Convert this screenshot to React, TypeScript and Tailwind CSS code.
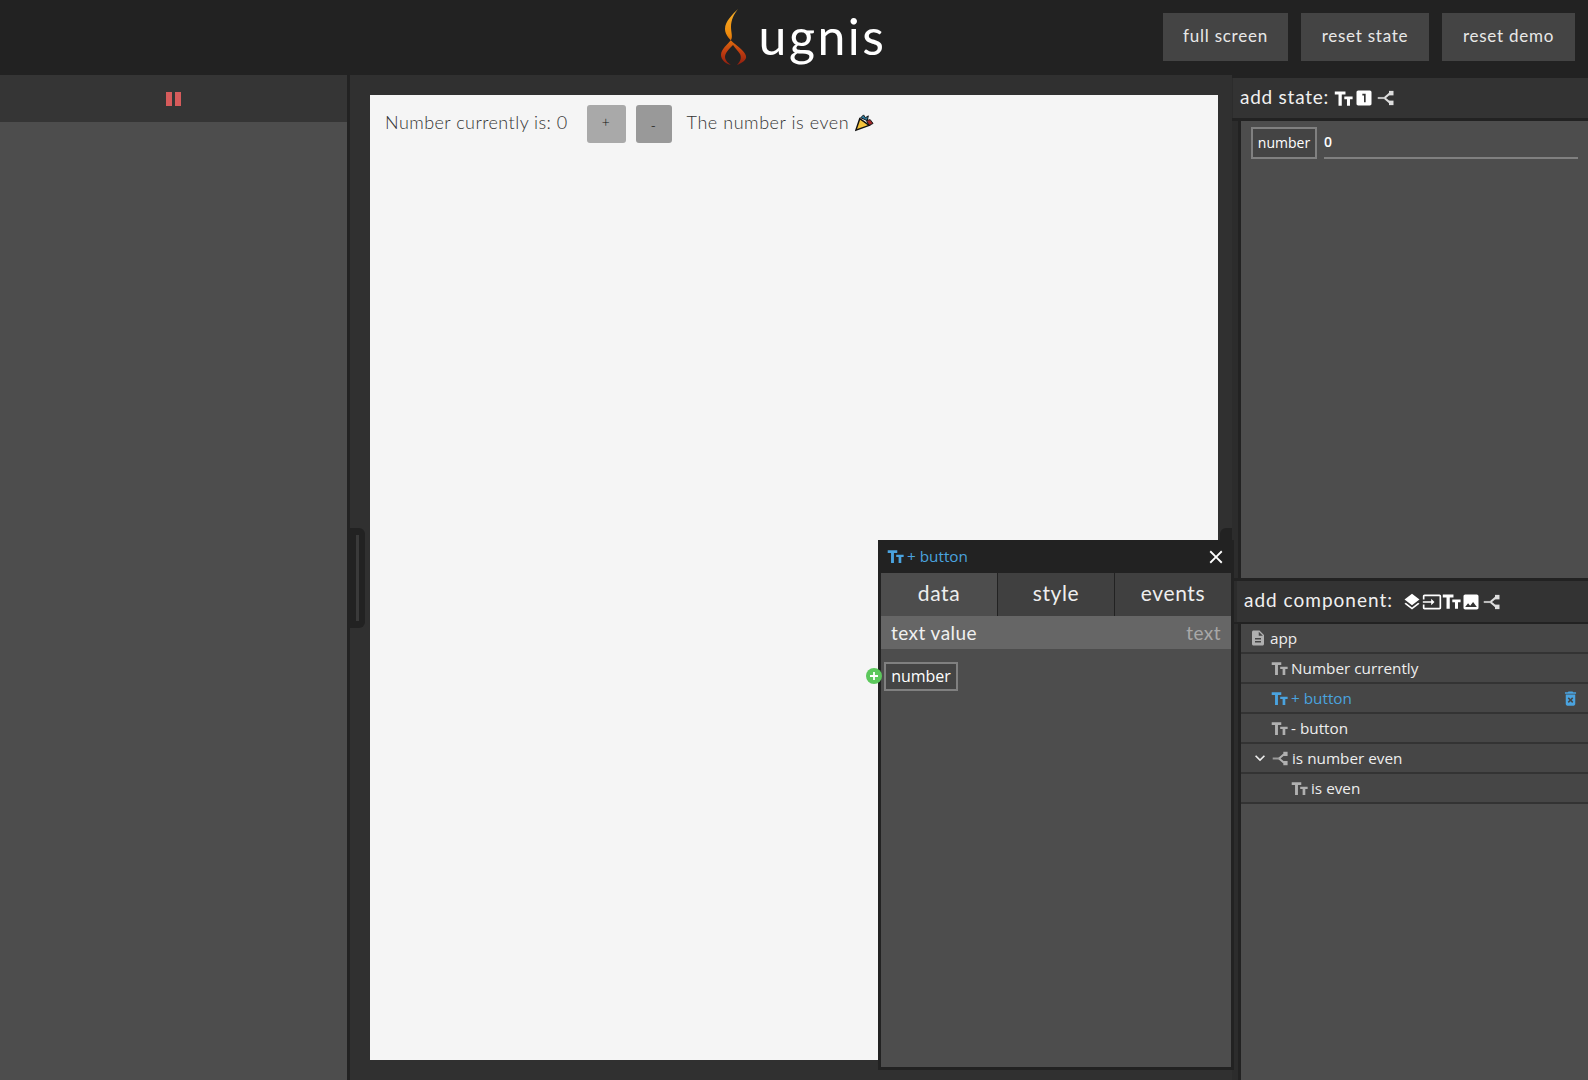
const paths = {
  layers: "M11.99 18.54l-7.37-5.73L3 14.07l9 7 9-7-1.63-1.27-7.38 5.74zM12 16l7.36-5.73L21 9l-9-7-9 7 1.63 1.27L12 16z",
  input: "M21 3.01H3c-1.1 0-2 .9-2 2V9h2V4.99h18v14.03H3V15H1v4.01c0 1.1.9 1.98 2 1.98h18c1.1 0 2-.88 2-1.98v-14c0-1.11-.9-2-2-2zM11 16l4-4-4-4v3H1v2h10v3z",
  image: "M21 19V5c0-1.1-.9-2-2-2H5c-1.1 0-2 .9-2 2v14c0 1.1.9 2 2 2h14c1.1 0 2-.9 2-2zM8.5 13.5l2.5 3.01L14.5 12l4.5 6H5l3.5-4.5z",
  one: "M19 3H5c-1.1 0-2 .9-2 2v14c0 1.1.9 2 2 2h14c1.1 0 2-.9 2-2V5c0-1.1-.9-2-2-2zm-5 14h-2V9h-2V7h4v10z",
  doc: "M14 2H6c-1.1 0-1.99.9-1.99 2L4 20c0 1.1.89 2 1.99 2H18c1.1 0 2-.9 2-2V8l-6-6zm2 16H8v-2h8v2zm0-4H8v-2h8v2zm-3-5V3.5L18.5 9H13z",
  trash: "M6 19c0 1.1.9 2 2 2h8c1.1 0 2-.9 2-2V7H6v12zm2.46-7.12l1.41-1.41L12 12.59l2.12-2.12 1.41 1.41L13.41 14l2.12 2.12-1.41 1.41L12 15.41l-2.12 2.12-1.41-1.41L10.59 14l-2.13-2.12zM15.5 4l-1-1h-5l-1 1H5v2h14V4z",
  chevron: "M16.59 8.59L12 13.17 7.41 8.59 6 10l6 6 6-6z",
  close: "M19 6.41L17.59 5 12 10.59 6.41 5 5 6.41 10.59 12 5 17.59 6.41 19 12 13.41 17.59 19 19 17.59 13.41 12 19 6.41z",
}

function Icon({ d, className }: { d: string; className: string }) {
  return (
    <svg viewBox="0 0 24 24" fill="currentColor" className={className} aria-hidden="true">
      <path d={d} />
    </svg>
  )
}

// big T first, then the small one
function TextIcon({ className }: { className: string }) {
  return (
    <svg viewBox="0 0 24 24" fill="currentColor" className={className} aria-hidden="true">
      <path d="M1 3h13.500v4H9.800v14H5.700V7H1V3zm12 6.500h10.500v3.300h-3.300V21h-3.800v-8.200H13V9.500z" />
    </svg>
  )
}

function SplitIcon({ className }: { className: string }) {
  return (
    <svg viewBox="0 0 24 24" fill="none" stroke="currentColor" className={className} aria-hidden="true">
      <path d="M1 12h9" strokeWidth="2.800" opacity="0.8" />
      <path d="M10 12l7-6M10 12l7 6" strokeWidth="2.800" />
      <rect x="16" y="2.500" width="6" height="6" fill="currentColor" stroke="none" />
      <rect x="16" y="15.500" width="6" height="6" fill="currentColor" stroke="none" />
    </svg>
  )
}

function Flame() {
  return (
    <svg viewBox="0 0 30 60" className="w-[30px] h-[60px]" aria-hidden="true">
      <defs>
        <linearGradient id="flame" x1="0" y1="0" x2="0" y2="1">
          <stop offset="0" stopColor="#f6b02a" />
          <stop offset="0.45" stopColor="#ee8a0c" />
          <stop offset="0.75" stopColor="#c23f10" />
          <stop offset="1" stopColor="#8f1e0f" />
        </linearGradient>
      </defs>
      <path
        fill="url(#flame)"
        d="M19 2C14 7 6 14 6 22c0 6 5 11 10 15 5 4 10 8 11 12 1 4-4 7-9 9 3-3 5-7 3-11-2-3-5-6-7-9-4 4-8 8-8 12 0 3 3 6 6 8-5-1-10-5-10-10 0-6 7-11 10-15 2-3 0-8 0-13C12 13 15 7 19 2z"
      />
    </svg>
  )
}

function PartyPopper() {
  return (
    <svg viewBox="0 0 20 20" className="w-[19px] h-[19px] ml-[6px] mb-[3px]" aria-hidden="true">
      <path d="M1 18L5 6l10 7z" fill="#f5c33b" stroke="#111" strokeWidth="1.500" />
      <path d="M6 5l3-3 2 3 3-2-1 5z" fill="#2b7a9e" stroke="#111" strokeWidth="1" />
      <path d="M12 8l4-1 3 4-4 2z" fill="#a3282a" stroke="#111" strokeWidth="1" />
    </svg>
  )
}

function HeaderButton({ label, width }: { label: string; width: string }) {
  return (
    <div className={`h-12 flex items-center justify-center bg-[#444444] pb-[2px] text-[#e8e8e8] text-[17px] tracking-[0.75px] ${width}`}>
      {label}
    </div>
  )
}

type TreeNode = {
  label: string
  icon: "text" | "doc" | "split"
  indent: string
  active?: boolean
  chevron?: boolean
}

const tree: TreeNode[] = [
  { label: "app", icon: "doc", indent: "pl-[8px]" },
  { label: "Number currently", icon: "text", indent: "pl-[30px]" },
  { label: "+ button", icon: "text", indent: "pl-[30px]", active: true },
  { label: "- button", icon: "text", indent: "pl-[30px]" },
  { label: "is number even", icon: "split", indent: "pl-[9px]", chevron: true },
  { label: "is even", icon: "text", indent: "pl-[50px]" },
]

function TreeRow({ node }: { node: TreeNode }) {
  return (
    <div
      className={`h-[30px] flex items-center border-b-2 border-[#333333] bg-[#464646] text-[15.3px] ${node.indent} ${
        node.active ? "text-[#4aa3df]" : "text-[#eeeeee]"
      }`}
    >
      {node.chevron && <Icon d={paths.chevron} className="w-[20px] h-[20px] text-[#eeeeee] mr-[2px]" />}
      <span className={`flex items-center mr-[3px] ${node.active ? "text-[#4aa3df]" : "text-[#b0b0b0]"}`}>
        {node.icon === "doc" && <Icon d={paths.doc} className="w-[18px] h-[18px]" />}
        {node.icon === "text" && <TextIcon className="w-[17px] h-[17px]" />}
        {node.icon === "split" && <SplitIcon className="w-[17px] h-[17px]" />}
      </span>
      <span>{node.label}</span>
      {node.active && <Icon d={paths.trash} className="w-[19px] h-[19px] ml-auto mr-[8px]" />}
    </div>
  )
}

function PropertyWindow() {
  return (
    <div className="absolute left-[878px] top-[540px] w-[356px] h-[530px] flex flex-col bg-[#222222] px-[3px] pb-[3px] font-['Open_Sans',sans-serif]">
      <div className="h-[33px] shrink-0 flex items-center text-[15.3px] text-[#4aa3df] pl-[6px] pr-[4px]">
        <TextIcon className="w-[17px] h-[17px] mr-[3px]" />
        <span>+ button</span>
        <Icon d={paths.close} className="w-[22px] h-[22px] ml-auto text-white" />
      </div>
      <div className="h-[43px] shrink-0 flex text-[21px] text-[#eeeeee] tracking-[0.6px] font-['Lato',sans-serif]">
        <div className="w-[116px] flex items-center justify-center bg-[#4d4d4d] pb-[4px]">data</div>
        <div className="w-[117px] flex items-center justify-center bg-[#404040] border-l border-[#222222] pb-[4px]">style</div>
        <div className="flex-1 flex items-center justify-center bg-[#404040] border-l border-[#222222] pb-[4px]">events</div>
      </div>
      <div className="flex-1 bg-[#4d4d4d] flex flex-col">
        <div className="h-[33px] flex items-center justify-between bg-[#666666] px-[10px] text-[19px] tracking-[0.45px] font-['Lato',sans-serif]">
          <span className="text-[#f0f0f0] mt-[1px]">text value</span>
          <span className="text-[#a8a8a8] mt-[1px]">text</span>
        </div>
        <div className="relative mt-[13px] ml-[3px] w-[74px] h-[29px] flex items-center justify-center border-2 border-[#808080] bg-[#444444] text-white text-[16px] pb-[2px]">
          number
          <span className="absolute left-[-20px] top-[4px] w-4 h-4 rounded-full bg-[#5cc85c] flex items-center justify-center">
            <svg viewBox="0 0 10 10" className="w-[10px] h-[10px]" aria-hidden="true">
              <path d="M5 1v8M1 5h8" stroke="#fff" strokeWidth="1.800" />
            </svg>
          </span>
        </div>
      </div>
    </div>
  )
}

export default function App() {
  return (
    <div className="relative w-full h-screen overflow-hidden flex flex-col bg-[#222222] font-['Lato',sans-serif]">
      <header className="h-[75px] shrink-0 grid grid-cols-[1fr_auto_1fr] items-center pb-[2px]">
        <div />
        <div className="flex items-center ml-[17px]">
          <Flame />
          <span className="ml-[10px] text-[50px] leading-none text-white tracking-[2.5px] mb-[2px]">ugnis</span>
        </div>
        <div className="flex justify-end gap-[13px] pr-[13px]">
          <HeaderButton label="full screen" width="w-[125px]" />
          <HeaderButton label="reset state" width="w-[128px]" />
          <HeaderButton label="reset demo" width="w-[133px]" />
        </div>
      </header>

      <div className="flex-1 flex min-h-0">
        <aside className="w-[347px] shrink-0 flex flex-col bg-[#4d4d4d]">
          <div className="h-[47px] flex items-center justify-center gap-[3px] bg-[#353535]">
            <span className="w-[6px] h-[14px] bg-[#d65b5b]" />
            <span className="w-[6px] h-[14px] bg-[#d65b5b]" />
          </div>
        </aside>

        <main className="relative flex-1 min-w-0 border-l-[3px] border-[#222222] bg-[#303030] pl-[20px] pt-[20px] pb-[20px] pr-[14px]">
          <div className="h-full bg-[#f5f5f5] flex items-start pl-[15px] pt-[10px] text-[18px] text-[#333333] font-light tracking-[0.45px]">
            <div className="h-[38px] flex items-center">
              <span className="mb-[3px]">Number currently is: 0</span>
              <button className="w-[39px] h-[38px] ml-[19px] rounded-[3px] bg-[#a9a9a9] text-[#111111] text-[14px] pb-[3px] font-['Open_Sans',sans-serif]">+</button>
              <button className="w-[36px] h-[38px] ml-[10px] rounded-[3px] bg-[#999999] text-[#111111] text-[14px] font-['Open_Sans',sans-serif]">-</button>
              <span className="ml-[15px] mb-[3px] tracking-[0.55px]">The number is even</span>
              <PartyPopper />
            </div>
          </div>
          <div className="absolute left-0 top-[453px] w-[15px] h-[100px] bg-[#222222] rounded-r-[6px] flex items-center justify-center">
            <span className="w-[3px] h-[86px] bg-[#3a3a3a]" />
          </div>
          <div className="absolute right-0 top-[453px] w-[12px] h-[100px] bg-[#222222] rounded-l-[6px]" />
        </main>

        <aside className="w-[356px] shrink-0 flex flex-col bg-[#2c2c2c]">
          <div className="h-[3px] shrink-0 bg-[#222222]" />
          <div className="h-[40px] shrink-0 ml-[1px] flex items-center bg-[#333333] pl-[7px] text-[19px] text-[#f0f0f0] tracking-[0.75px]">
            <span className="mb-[2px]">add state:</span>
            <span className="flex items-center text-white ml-[5px] gap-[1px]">
              <TextIcon className="w-[19px] h-[19px]" />
              <Icon d={paths.one} className="w-[20px] h-[20px]" />
              <SplitIcon className="w-[18px] h-[18px] text-[#dddddd] ml-[2px]" />
            </span>
          </div>
          <div className="h-[3px] shrink-0 bg-[#222222]" />
          <div className="h-[457px] shrink-0 ml-[6px] border-l-[3px] border-[#222222] bg-[#4d4d4d] pl-[10px] pt-[6px] pr-[10px] flex items-start font-['Open_Sans',sans-serif]">
            <div className="w-[66px] h-[32px] flex items-center justify-center border-2 border-[#808080] bg-[#444444] text-white text-[14px] pb-[2px]">
              number
            </div>
            <div className="flex-1 h-[32px] ml-[7px] flex items-center border-b-2 border-[#808080] text-white text-[14px] font-semibold pb-[2px]">
              0
            </div>
          </div>
          <div className="h-[3px] shrink-0 bg-[#222222]" />
          <div className="h-[41px] shrink-0 ml-[5px] flex items-center bg-[#333333] pl-[7px] text-[19px] text-[#f0f0f0] tracking-[1px]">
            <span className="mb-[3px]">add component:</span>
            <span className="flex items-center text-white ml-[9px]">
              <Icon d={paths.layers} className="w-[20px] h-[20px]" />
              <Icon d={paths.input} className="w-[20px] h-[20px]" />
              <TextIcon className="w-[19px] h-[19px]" />
              <Icon d={paths.image} className="w-[20px] h-[20px]" />
              <SplitIcon className="w-[18px] h-[18px] text-[#dddddd] ml-[2px]" />
            </span>
          </div>
          <div className="h-[2px] shrink-0 bg-[#222222]" />
          <div className="flex-1 ml-[6px] border-l-[3px] border-[#222222] bg-[#4d4d4d] font-['Open_Sans',sans-serif]">
            {tree.map((node) => (
              <TreeRow key={node.label} node={node} />
            ))}
          </div>
        </aside>
      </div>

      <PropertyWindow />
    </div>
  )
}
